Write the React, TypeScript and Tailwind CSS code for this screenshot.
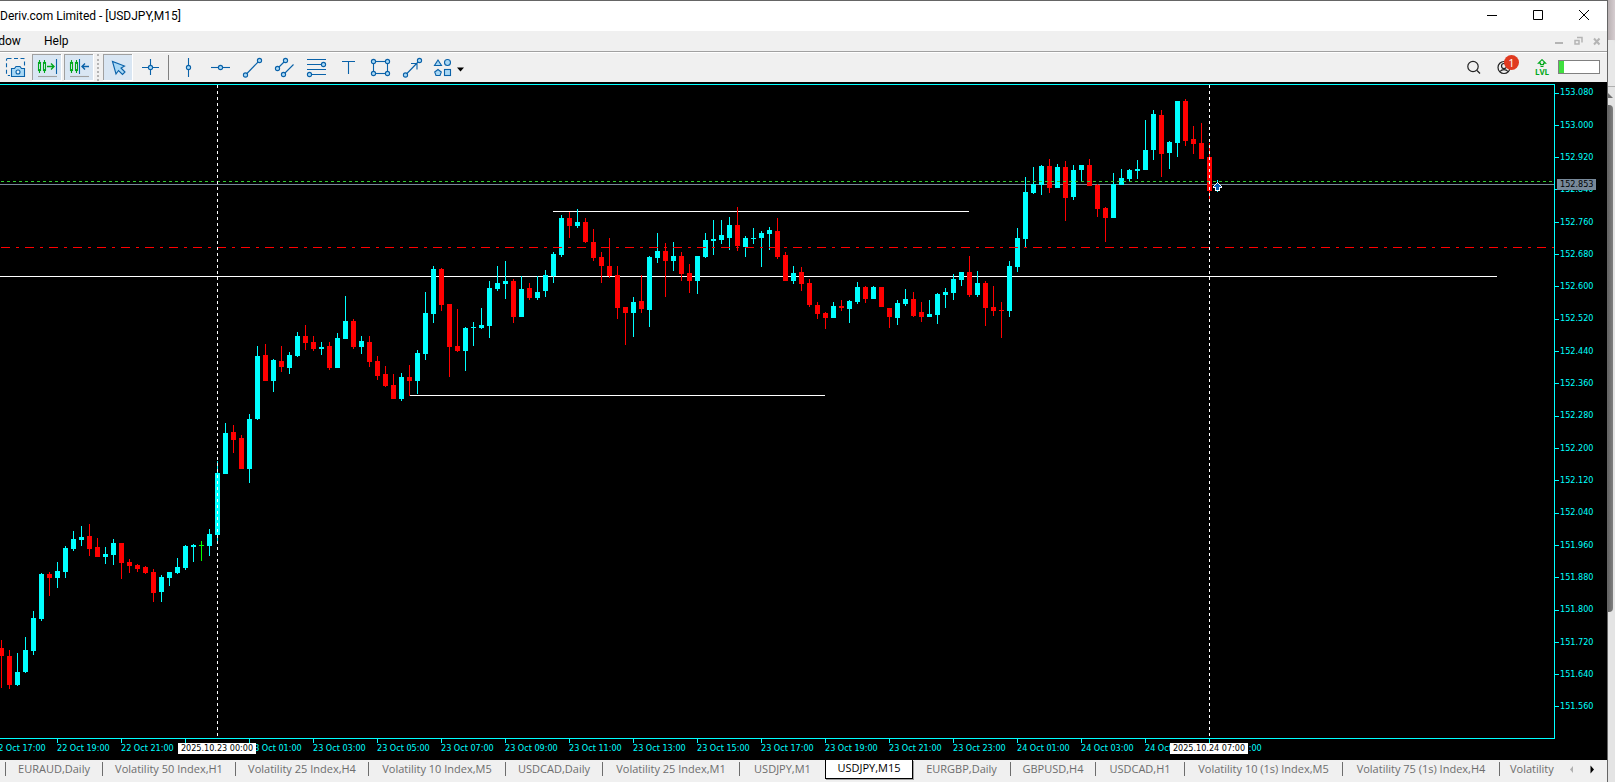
import type { ReactNode } from 'react';

type Kind = 'up' | 'down' | 'flat';
type Candle = [high: number, top: number, bottom: number, low: number, kind: Kind];

const U: Kind = 'up';
const D: Kind = 'down';
const F: Kind = 'flat';

const CANDLES: Candle[] = [
  [640, 648, 656, 688, D], [650, 656, 685, 689, D], [653, 672, 685, 686, U], [637, 650, 672, 673, U],
  [611, 618, 651, 655, U], [573, 574, 619, 621, U], [572, 574, 578, 596, D], [562, 571, 578, 588, U],
  [546, 548, 572, 578, U], [531, 539, 549, 551, U], [526, 537, 540, 546, U], [524, 536, 549, 556, D],
  [538, 547, 557, 557, D], [547, 554, 557, 564, U], [539, 543, 555, 565, U], [543, 543, 563, 579, D],
  [559, 562, 566, 573, D], [564, 565, 569, 572, D], [566, 567, 573, 574, D], [569, 572, 593, 602, D],
  [575, 577, 592, 602, U], [572, 572, 578, 586, U], [558, 567, 573, 574, U], [545, 546, 568, 570, U],
  [544, 545, 547, 562, U], [541, 545, 546, 561, F], [529, 534, 546, 556, U], [461, 473, 535, 541, U],
  [423, 433, 474, 474, U], [425, 432, 440, 453, D], [435, 438, 469, 469, D], [414, 419, 469, 483, U],
  [346, 356, 419, 420, U], [344, 355, 381, 381, D], [359, 360, 381, 392, U], [346, 361, 367, 372, D],
  [352, 355, 368, 374, U], [332, 336, 356, 357, U], [325, 336, 343, 350, D], [336, 342, 349, 351, D],
  [342, 347, 349, 355, U], [342, 346, 368, 370, D], [333, 338, 368, 368, U], [296, 321, 339, 339, U],
  [319, 321, 347, 349, D], [336, 341, 347, 354, U], [336, 342, 362, 367, D], [356, 361, 376, 380, D],
  [366, 374, 386, 387, D], [374, 385, 399, 399, D], [373, 377, 399, 401, U], [365, 377, 381, 396, D],
  [350, 353, 381, 394, U], [292, 313, 354, 360, U], [266, 269, 314, 323, U], [268, 269, 305, 311, D],
  [304, 304, 347, 377, D], [309, 346, 351, 352, D], [327, 328, 351, 371, U], [322, 327, 328, 346, U],
  [308, 325, 328, 329, U], [281, 288, 326, 338, U], [266, 283, 289, 291, U], [261, 281, 284, 299, U],
  [279, 281, 317, 323, D], [276, 289, 317, 317, U], [283, 288, 298, 300, D], [276, 292, 298, 300, U],
  [270, 275, 291, 297, U], [252, 254, 276, 283, U], [215, 218, 255, 257, U], [212, 218, 226, 238, D],
  [209, 222, 226, 228, U], [218, 222, 242, 243, D], [229, 242, 258, 261, D], [252, 257, 266, 283, D],
  [238, 266, 276, 278, D], [266, 275, 308, 319, D], [307, 307, 313, 345, D], [297, 302, 313, 337, U],
  [275, 301, 309, 313, D], [256, 257, 310, 327, U], [233, 251, 258, 263, U], [243, 251, 261, 297, D],
  [242, 256, 261, 271, U], [252, 256, 274, 281, D], [264, 273, 281, 293, D], [256, 256, 281, 294, U],
  [233, 240, 257, 258, U], [220, 239, 241, 255, U], [220, 235, 240, 244, U], [217, 225, 238, 250, U],
  [207, 225, 246, 251, D], [236, 238, 247, 257, U], [228, 238, 239, 244, U], [231, 233, 238, 267, U],
  [227, 230, 234, 250, U], [218, 231, 257, 259, D], [252, 255, 281, 281, D], [266, 273, 281, 284, U],
  [267, 272, 284, 291, D], [279, 283, 305, 307, D], [302, 305, 314, 319, D], [312, 313, 318, 329, D],
  [302, 306, 318, 318, U], [300, 306, 308, 311, D], [300, 301, 309, 323, U], [282, 287, 302, 304, U],
  [286, 287, 299, 303, D], [286, 287, 299, 299, U], [287, 287, 307, 307, D], [308, 308, 317, 328, D],
  [300, 303, 318, 325, U], [289, 299, 304, 306, U], [292, 299, 316, 317, D], [302, 312, 317, 322, D],
  [300, 314, 317, 317, U], [293, 294, 315, 324, U], [288, 292, 295, 308, U], [274, 279, 293, 300, U],
  [272, 272, 280, 286, U], [256, 272, 295, 297, D], [271, 283, 295, 297, U], [281, 283, 308, 326, D],
  [286, 307, 311, 316, D], [302, 310, 311, 338, D], [261, 266, 311, 317, U], [228, 238, 267, 272, U],
  [177, 192, 239, 248, U], [167, 184, 193, 194, U], [165, 166, 185, 195, U], [159, 166, 188, 193, D],
  [164, 167, 188, 188, U], [161, 167, 198, 221, D], [165, 170, 197, 200, U], [165, 165, 170, 181, U],
  [159, 165, 186, 186, D], [184, 185, 209, 217, D], [207, 208, 218, 242, D], [173, 184, 218, 218, U],
  [169, 178, 185, 185, U], [169, 170, 179, 181, U], [160, 169, 171, 179, U], [120, 150, 170, 170, U],
  [110, 114, 150, 160, U], [110, 115, 154, 177, D], [141, 142, 153, 169, U], [101, 101, 143, 157, U],
  [99, 101, 141, 146, D], [126, 139, 144, 154, D], [123, 143, 159, 159, D], [143, 157, 191, 199, D],
  [180, 189, 191, 192, U],
];

const COLORS: Record<Kind, string> = { up: '#00ffff', down: '#ff0000', flat: '#00ff00' };
const STEP = 8;
const TOP = 82;

const PRICES = Array.from({ length: 20 }, (_, i) => (153.08 - i * 0.08).toFixed(3));

const TIMES = [
  '22 Oct 17:00', '22 Oct 19:00', '22 Oct 21:00', '22 Oct 23:00', '23 Oct 01:00', '23 Oct 03:00', '23 Oct 05:00',
  '23 Oct 07:00', '23 Oct 09:00', '23 Oct 11:00', '23 Oct 13:00', '23 Oct 15:00', '23 Oct 17:00', '23 Oct 19:00',
  '23 Oct 21:00', '23 Oct 23:00', '24 Oct 01:00', '24 Oct 03:00', '24 Oct 05:00', '24 Oct 07:00',
];

const TABS: { name: string; width: string; active?: boolean; last?: boolean }[] = [
  { name: 'EURAUD,Daily', width: 'w-[97px]' },
  { name: 'Volatility 50 Index,H1', width: 'w-[133px]' },
  { name: 'Volatility 25 Index,H4', width: 'w-[133px]' },
  { name: 'Volatility 10 Index,M5', width: 'w-[137px]' },
  { name: 'USDCAD,Daily', width: 'w-[97px]' },
  { name: 'Volatility 25 Index,M1', width: 'w-[137px]' },
  { name: 'USDJPY,M1', width: 'w-[85px]', last: true },
  { name: 'USDJPY,M15', width: 'w-[88px]', active: true },
  { name: 'EURGBP,Daily', width: 'w-[98px]' },
  { name: 'GBPUSD,H4', width: 'w-[85px]' },
  { name: 'USDCAD,H1', width: 'w-[89px]' },
  { name: 'Volatility 10 (1s) Index,M5', width: 'w-[158px]' },
  { name: 'Volatility 75 (1s) Index,H4', width: 'w-[157px]' },
];

function Chart() {
  return (
    <svg className="block h-full w-full" role="img" aria-label="USDJPY M15 candlestick chart" shapeRendering="crispEdges">
      <g transform={`translate(0 ${-TOP})`}>
        <path d="M0 276.5H1497M553 211.5H969M410 395.5H825" stroke="#fff" />
        <path d="M0 184.5H4000" stroke="#778899" />
        {CANDLES.map(([high, top, bottom, low, kind], i) => (
          <g key={i} fill={COLORS[kind]}>
            <rect x={i * STEP + 1} y={high} width={1} height={low - high} />
            <rect x={i * STEP - 1} y={top} width={5} height={bottom - top} />
          </g>
        ))}
        <path d="M-5 181.5H4000" stroke="#32cd32" strokeDasharray="3 3" />
        <path d="M1 247.5H4000" stroke="#ff0000" strokeDasharray="9 6 3 6" />
        <path d="M217.5 85V737M1209.5 85V737" stroke="#fff" strokeDasharray="3 3" />
        <path d="M1217 182h1v1h1v1h1v1h1v1h1v2h-2v3h-5v-3h-2v-2h1v-1h1v-1h1v-1h1z" fill="#fff" />
        <path d="M1217 183h1v1h1v1h1v1h1v1h-2v3h-3v-3h-2v-1h1v-1h1v-1h1z" fill="#0a5fb4" />
      </g>
    </svg>
  );
}

const BLUE = '#0a62a9';
const FILL = '#a9d8f5';

function Tool({ label, pressed, children }: { label: string; pressed?: boolean; children: ReactNode }) {
  return (
    <button type="button" aria-label={label} aria-pressed={pressed} className="h-[28px] w-8 shrink-0">
      <svg width="32" height="28" viewBox="0 0 32 28" fill="none" stroke={BLUE} strokeWidth="1.1" aria-hidden="true">
        {children}
      </svg>
    </button>
  );
}

function PressedBack({ x = 0 }: { x?: number }) {
  return (
    <g stroke="none" shapeRendering="crispEdges">
      <rect x={x} y="1" width="30" height="27" fill="#fff" />
      <rect x={x} y="1" width="29" height="26" fill="#a0a0a0" />
      <rect x={x + 1} y="2" width="28" height="25" fill="#d9e6f3" />
    </g>
  );
}

function Node({ x, y }: { x: number; y: number }) {
  return <circle cx={x} cy={y} r="2.1" fill={FILL} stroke={BLUE} />;
}

function Candles() {
  return (
    <g stroke="#00a81c">
      <rect x="6.5" y="9.500" width="2" height="8" />
      <path d="M7.5 7v2.5M7.5 17.5v2.5" />
      <rect x="11.5" y="9.5" width="2" height="8" />
      <path d="M12.5 7v2.5M12.5 17.5v2.5" />
    </g>
  );
}

function Toolbar() {
  return (
    <div role="toolbar" aria-label="Chart tools" className="flex h-[30px] items-start border-t border-white bg-[#f0f0f0]">
      <Tool label="Save picture">
        <rect x="6.5" y="5.5" width="18" height="17" rx="1" strokeDasharray="4 2.5" />
        <path d="M10 13h16v12H10z" fill="#f0f0f0" stroke="none" />
        <path d="M11.5 15.5h3l1.5-2h4l1.5 2h3v8h-13z" fill={FILL} />
        <circle cx="18" cy="19" r="2" fill="#e8f4fc" />
      </Tool>
      <Tool label="Chart shift" pressed>
        <PressedBack />
        <Candles />
        <path d="M15 13.5h7M19 10.5l3 3-3 3" stroke="#00a81c" strokeWidth="1.4" />
        <path d="M24.5 6v15" />
        <path d="M6 23.5h19" stroke="#a0a0a0" />
      </Tool>
      <Tool label="Auto scroll" pressed>
        <PressedBack />
        <Candles />
        <path d="M15.5 6v15" />
        <path d="M25 13.5h-7M21 10.5l-3 3 3 3" strokeWidth="1.4" />
        <path d="M6 23.5h19" stroke="#a0a0a0" />
      </Tool>
      <span className="mt-px ml-px h-[27px] w-[5px] shrink-0 border-l-2 border-dotted border-[#b4b4b4]" />
      <Tool label="Cursor" pressed>
        <PressedBack x={1} />
        <path d="M10.5 8.5l3.5 12.5 2.5-3.5 4 4 2.5-2.5-4-4 3.5-2z" fill={FILL} />
      </Tool>
      <Tool label="Crosshair">
        <path d="M16.5 6v16M8 14.5h17" />
        <Node x={16.5} y={14.5} />
      </Tool>
      <span className="mt-[2px] ml-[2px] h-[25px] w-1 shrink-0 border-l border-[#808080]" />
      <Tool label="Vertical line">
        <path d="M16.5 5v19" />
        <Node x={16.5} y={14.5} />
      </Tool>
      <Tool label="Horizontal line">
        <path d="M7 14.5h19" />
        <Node x={16.5} y={14.5} />
      </Tool>
      <Tool label="Trend line">
        <path d="M9.5 22L23.5 7.5" />
        <Node x={9.5} y={22} />
        <Node x={23.5} y={7.5} />
      </Tool>
      <Tool label="Equidistant channel">
        <path d="M9.5 15.5l8-8M15.5 21.5l10-10" />
        <Node x={9.5} y={15.5} />
        <Node x={17.5} y={7.5} />
        <Node x={15.5} y={21.5} />
      </Tool>
      <Tool label="Fibonacci retracement">
        <path d="M7 6.5h19M7 11.5h16M7 16.5h19M10 21.5h16" />
        <Node x={23.5} y={11.5} />
        <Node x={9.5} y={21.5} />
      </Tool>
      <Tool label="Text">
        <path d="M10 8.5h13M16.5 8.5v12.5" />
      </Tool>
      <Tool label="Rectangle">
        <rect x="9.5" y="8.5" width="14" height="12" />
        <Node x={9.5} y={8.5} />
        <Node x={23.5} y={8.5} />
        <Node x={9.5} y={20.5} />
        <Node x={23.5} y={20.5} />
      </Tool>
      <Tool label="Arrowed line">
        <path d="M9.5 22L23.5 7.5M15 10.5h6v6" />
        <Node x={9.5} y={22} />
        <Node x={23.5} y={7.5} />
      </Tool>
      <Tool label="Shapes">
        <path d="M10 7l3.5 5.5h-7z" fill={FILL} />
        <circle cx="19.5" cy="9.5" r="3" fill={FILL} />
        <path d="M10 16.5l3.3 2.5-1.3 3.5h-4l-1.3-3.5z" fill={FILL} />
        <rect x="16.5" y="16.5" width="6" height="6" fill={FILL} />
      </Tool>
      <button type="button" aria-label="More shapes" className="-ml-1 h-[28px] w-2 shrink-0">
        <svg width="8" height="28" viewBox="0 0 8 28" aria-hidden="true">
          <path d="M1 14.500h7l-3.500 4z" fill="#000" />
        </svg>
      </button>

      <div className="ml-auto flex h-[28px] items-center">
        <button type="button" aria-label="Search" className="h-[28px] w-8">
          <svg width="32" height="28" viewBox="0 0 32 28" fill="none" stroke="#222" strokeWidth="1.2" aria-hidden="true">
            <circle cx="15" cy="13.5" r="5.2" />
            <path d="M19 17.500l3 3" />
          </svg>
        </button>
        <button type="button" aria-label="Account, 1 notification" className="relative h-[28px] w-[38px]">
          <svg width="38" height="28" viewBox="0 0 38 28" fill="none" stroke="#222" strokeWidth="1.2" aria-hidden="true">
            <circle cx="14" cy="14.5" r="6" />
            <circle cx="14" cy="13" r="2.5" />
            <path d="M10 18.5c2-2.500 6-2.500 8 0" />
          </svg>
          <span className="absolute top-[2px] left-[14px] flex size-[15px] items-center justify-center rounded-full bg-[#e03a20] font-['Open_Sans',sans-serif] text-[11px] leading-none text-white">
            1
          </span>
        </button>
        <div className="flex w-7 flex-col items-center text-[#00a81c]">
          <svg width="10" height="9" viewBox="0 0 10 9" fill="none" stroke="#00a81c" strokeWidth="1.2" aria-hidden="true">
            <path d="M5 .7l3.500 3.500h-2v1.500h-3v-1.500h-2zM3.500 7.500h3" />
          </svg>
          <span className="font-['Open_Sans',sans-serif] text-[8px] leading-[8px] font-bold">LVL</span>
        </div>
        <div className="mr-[7px] ml-[2px] flex h-[14px] w-[42px] border border-[#808080] bg-white">
          <span className="w-[5px] bg-[#3fe03f]" />
        </div>
      </div>
    </div>
  );
}

function TitleBar() {
  return (
    <header className="flex h-[31px] items-center justify-between border-t border-[#656565] bg-white">
      <h1 className="font-['Roboto',sans-serif] text-[12px] leading-4">Deriv.com Limited - [USDJPY,M15]</h1>
      <div className="flex">
        {[
          { label: 'Minimize', d: 'M18 15.5h10' },
          { label: 'Maximize', d: 'M18.5 10.5h9v9h-9z' },
          { label: 'Close', d: 'M18 10l10 10M28 10L18 20' },
        ].map(({ label, d }) => (
          <button key={label} type="button" aria-label={label} className="h-[30px] w-[46px]">
            <svg width="46" height="30" viewBox="0 1 46 30" fill="none" stroke="#000" aria-hidden="true">
              <path d={d} />
            </svg>
          </button>
        ))}
      </div>
    </header>
  );
}

function MenuBar() {
  return (
    <nav aria-label="Main menu" className="flex h-[21px] items-center justify-between border-b border-[#a0a0a0] bg-[#f0f0f0]">
      <div className="flex font-['Roboto',sans-serif] text-[12px] leading-4">
        <button type="button" className="-ml-[22px] w-[54px] text-left">Window</button>
        <button type="button" className="px-3">Help</button>
      </div>
      <div className="flex">
        {[
          { label: 'Minimize chart', d: 'M5 12h8', w: 2 },
          { label: 'Restore chart', d: 'M6 9.5h4v3.500h-4zM8 6.500h5v5', w: 1.5 },
          { label: 'Close chart', d: 'M6 7.500l5.500 6M11.500 7.500l-5.500 6', w: 2 },
        ].map(({ label, d, w }) => (
          <button key={label} type="button" aria-label={label} className="h-5 w-[19px]">
            <svg width="19" height="20" viewBox="0 0 19 20" fill="none" stroke="#b4b4b4" strokeWidth={w} aria-hidden="true">
              <path d={d} />
            </svg>
          </button>
        ))}
      </div>
    </nav>
  );
}

function Tabs() {
  return (
    <nav aria-label="Open charts" className="flex h-[22px] items-start bg-[#f0f0f0] text-[11px] leading-4 text-[#6d6d6d]">
      <span className="mt-[2px] h-[14px] w-[6px] shrink-0 border-r border-[#6d6d6d]" />
      {TABS.map(({ name, width, active, last }) =>
        active ? (
          <button
            key={name}
            type="button"
            aria-current="page"
            className={`${width} h-[19px] shrink-0 border border-t-0 border-black bg-white pb-[2px] whitespace-nowrap text-black shadow-[1px_1px_0_#a0a0a0]`}
          >
            {name}
          </button>
        ) : (
          <button
            key={name}
            type="button"
            className={`${width} mt-[2px] h-[14px] shrink-0 leading-[14px] whitespace-nowrap ${last ? '' : 'border-r border-[#6d6d6d]'}`}
          >
            {name}
          </button>
        ),
      )}
      <button type="button" className="mt-[2px] h-[14px] min-w-0 flex-1 overflow-hidden pl-[10px] text-left leading-[14px]">
        Volatility
      </button>
      <button type="button" aria-label="Scroll tabs left" className="h-5 w-5 shrink-0">
        <svg width="20" height="20" viewBox="0 0 20 20" aria-hidden="true">
          <path d="M7 9.500l3-3.500v7z" fill="#b0b0b0" />
        </svg>
      </button>
      <button type="button" aria-label="Scroll tabs right" className="mr-1 h-5 w-5 shrink-0">
        <svg width="20" height="20" viewBox="0 0 20 20" aria-hidden="true">
          <path d="M11 9.500l-3.500-4v8z" fill="#000" />
        </svg>
      </button>
    </nav>
  );
}

function ChartArea() {
  return (
    <main className="flex min-h-[640px] flex-1 flex-col bg-black font-['DejaVu_Sans_Condensed','DejaVu_Sans',sans-serif] text-[9px] text-[#00ffff]">
      <div className="flex min-h-0 flex-1">
        <div className="relative min-w-0 flex-1">
          <div className="absolute inset-x-0 top-[2px] bottom-0 border-t border-r border-b border-[#00ffff]" />
          <div className="absolute top-0 right-px bottom-px left-0 overflow-hidden">
            <Chart />
          </div>
        </div>
        <div className="relative flex w-[52px] flex-col justify-between pt-[3px] pb-[24px]">
          {PRICES.map((price) => (
            <div key={price} className="flex h-4 items-center">
              <span className="mr-px h-px w-1 bg-[#00ffff]" />
              {price}
            </div>
          ))}
          <span className="absolute top-[97px] left-[2px] h-[11px] w-[39px] bg-[#778899] pl-[3px] leading-[11px] text-black">
            152.853
          </span>
        </div>
      </div>
      <div className="relative flex h-[21px] overflow-hidden">
        {TIMES.map((time, i) => (
          <div key={time} className={`w-16 shrink-0 whitespace-nowrap ${i === 0 ? '-ml-[7px]' : ''}`}>
            <span className="block h-1 w-px bg-[#00ffff]" />
            <span className="block leading-[10px]">{time}</span>
          </div>
        ))}
        <span className="absolute top-[4px] left-[178px] h-[11px] w-[78px] bg-white text-center leading-[11px] whitespace-nowrap text-black">
          2025.10.23 00:00
        </span>
        <span className="absolute top-[4px] left-[1170px] h-[11px] w-[78px] bg-white text-center leading-[11px] whitespace-nowrap text-black">
          2025.10.24 07:00
        </span>
      </div>
    </main>
  );
}

export default function App() {
  return (
    <div className="flex min-h-screen overflow-hidden bg-[#e4e4e4] font-['Open_Sans','Noto_Sans',sans-serif] text-black">
      <div className="flex min-w-0 flex-1 flex-col overflow-hidden border-r border-[#656565]">
        <TitleBar />
        <MenuBar />
        <Toolbar />
        <ChartArea />
        <Tabs />
      </div>
      <div className="flex w-[7px] shrink-0 flex-col">
        <div className="h-10 bg-gradient-to-r from-[#b9b1b3] to-[#d6cdd0]" />
        <div className="h-[47px] rounded-tr border-b border-[#b0b0b0] bg-[#e8e8e8]" />
        <svg width="7" height="18" viewBox="0 0 7 18" aria-hidden="true">
          <path d="M0 6l5 5H0z" fill="#707070" />
        </svg>
        <div className="h-[507px] w-[5px] rounded-r bg-gradient-to-r from-[#636363] to-[#808080]" />
      </div>
    </div>
  );
}
